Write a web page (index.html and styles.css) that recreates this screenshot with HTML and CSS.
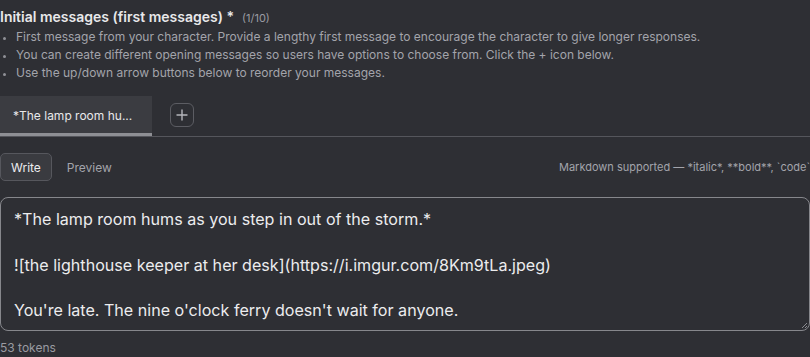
FILE: index.html
```html
<!DOCTYPE html>
<html>
<head>
<meta charset="utf-8">
<link rel="stylesheet" href="styles.css">
</head>
<body>
<div class="field">
  <div class="label-row">
    <span class="label">Initial messages (first messages) *</span>
    <span class="count">(1/10)</span>
  </div>
  <ul class="hints">
    <li>First message from your character. Provide a lengthy first message to encourage the character to give longer responses.</li>
    <li>You can create different opening messages so users have options to choose from. Click the + icon below.</li>
    <li>Use the up/down arrow buttons below to reorder your messages.</li>
  </ul>
  <div class="tabs">
    <div class="tab active">*The lamp room hu...</div>
    <button class="add-btn" aria-label="Add message">
      <svg width="12" height="12" viewBox="0 0 12 12"><path d="M6 1v10M1 6h10" stroke="currentColor" stroke-width="1.4" stroke-linecap="round" fill="none"/></svg>
    </button>
  </div>
  <div class="toolbar">
    <div class="modes">
      <button class="mode selected">Write</button>
      <button class="mode">Preview</button>
    </div>
    <div class="md-note">Markdown supported — *italic*, **bold**, `code`</div>
  </div>
  <div class="editor">
    <p>*The lamp room hums as you step in out of the storm.*</p>
    <p>&nbsp;</p>
    <p>![the lighthouse keeper at her desk](https://i.imgur.com/8Km9tLa.jpeg)</p>
    <p>&nbsp;</p>
    <p>You're late. The nine o'clock ferry doesn't wait for anyone.</p>
    <svg class="grip" width="8" height="8" viewBox="0 0 8 8"><path d="M7 2L2 7M7 5L5 7" stroke="#8a8b90" stroke-width="1" fill="none"/></svg>
  </div>
  <div class="tokens">53 tokens</div>
</div>
</body>
</html>
```
FILE: styles.css
```css
* { box-sizing: border-box; }
html, body {
  margin: 0;
  background: #2e2f34;
  font-family: Inter, "Noto Sans", sans-serif;
  color: #e4e4e7;
  overflow: hidden;
}
.field {
  width: 810px;
  padding-top: 8px;
}
.label-row {
  display: flex;
  align-items: baseline;
  gap: 8px;
  height: 20px;
}
.label {
  font-size: 14px;
  font-weight: 600;
  color: #e8e8ea;
}
.count {
  font-size: 11px;
  color: #9a9ba2;
}
.hints {
  margin: 0;
  padding: 0 0 0 16px;
  font-size: 12px;
  line-height: 18px;
  color: #a3a4ab;
}
.hints li::marker { font-size: 10px; color: #8f9096; }
.tabs {
  display: flex;
  align-items: center;
  gap: 18px;
  margin-top: 14px;
  border-bottom: 1px solid #55565c;
  height: 41px;
}
.tab {
  width: 152px;
  height: 40px;
  display: flex;
  align-items: center;
  padding-left: 13px;
  padding-top: 2px;
  font-size: 12px;
  color: #e8e8ea;
  background: #3b3c41;
  border-bottom: 3px solid #8e8f94;
}
.add-btn {
  width: 24px;
  height: 24px;
  border: 1px solid #5c5d63;
  border-radius: 6px;
  background: transparent;
  color: #b5b6bb;
  display: flex;
  align-items: center;
  justify-content: center;
  padding: 0;
  margin-top: -2px;
}
.toolbar {
  display: flex;
  justify-content: space-between;
  align-items: center;
  margin-top: 16px;
  height: 28px;
}
.modes { display: flex; gap: 4px; }
.mode {
  font-family: inherit;
  font-size: 12px;
  height: 28px;
  padding: 0 10px;
  border: 1px solid transparent;
  border-radius: 5px;
  background: transparent;
  color: #a3a4ab;
}
.mode.selected {
  background: #3a3b40;
  border-color: #56575d;
  color: #ececee;
}
.md-note {
  font-size: 11px;
  color: #a3a4ab;
  white-space: nowrap;
  margin-right: 0;
}
.editor {
  position: relative;
  margin-top: 16px;
  width: 810px;
  height: 134px;
  border: 1px solid #86878c;
  border-radius: 8px;
  padding: 10px 13px 0;
  font-size: 16.1px;
  line-height: 22.75px;
  color: #ececee;
}
.editor p { margin: 0; white-space: nowrap; }
.grip { position: absolute; right: 1px; bottom: 1px; }
.tokens {
  margin-top: 9px;
  font-size: 12px;
  color: #9a9ba2;
}
```
